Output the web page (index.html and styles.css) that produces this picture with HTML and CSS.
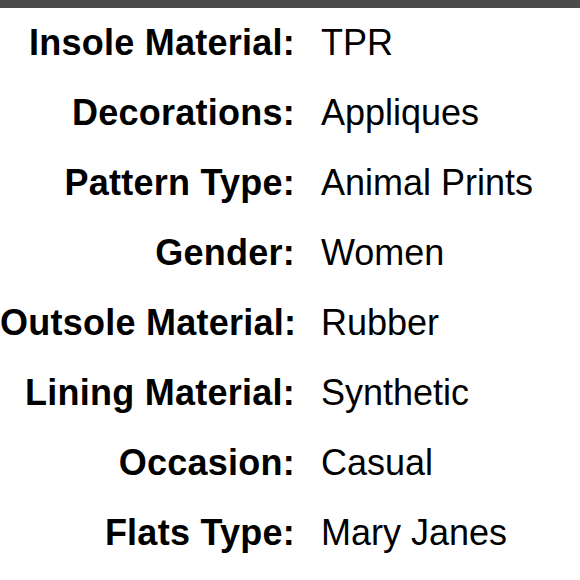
FILE: index.html
```html
<!DOCTYPE html>
<html>
<head>
<meta charset="utf-8">
<link rel="stylesheet" href="styles.css">
</head>
<body>
<div class="topbar"></div>
<dl class="specs">
  <dt>Insole Material:</dt><dd>TPR</dd>
  <dt>Decorations:</dt><dd>Appliques</dd>
  <dt>Pattern Type:</dt><dd>Animal Prints</dd>
  <dt>Gender:</dt><dd>Women</dd>
  <dt>Outsole Material:</dt><dd>Rubber</dd>
  <dt>Lining Material:</dt><dd>Synthetic</dd>
  <dt>Occasion:</dt><dd>Casual</dd>
  <dt>Flats Type:</dt><dd>Mary Janes</dd>
</dl>
</body>
</html>
```
FILE: styles.css
```css
html, body {
  margin: 0;
  padding: 0;
  background: #ffffff;
}
body {
  font-family: "Liberation Sans", Arial, sans-serif;
  color: #000;
  overflow: hidden;
}
.topbar {
  height: 8px;
  background: #4b4b4b;
}
.specs {
  margin: 0;
  display: grid;
  grid-template-columns: 295px 1fr;
  column-gap: 26px;
  font-size: 36px;
  line-height: 70px;
}
.specs dt {
  font-weight: bold;
  text-align: right;
  white-space: nowrap;
  letter-spacing: 0.25px;
}
.specs dd {
  margin: 0;
  white-space: nowrap;
}
```
